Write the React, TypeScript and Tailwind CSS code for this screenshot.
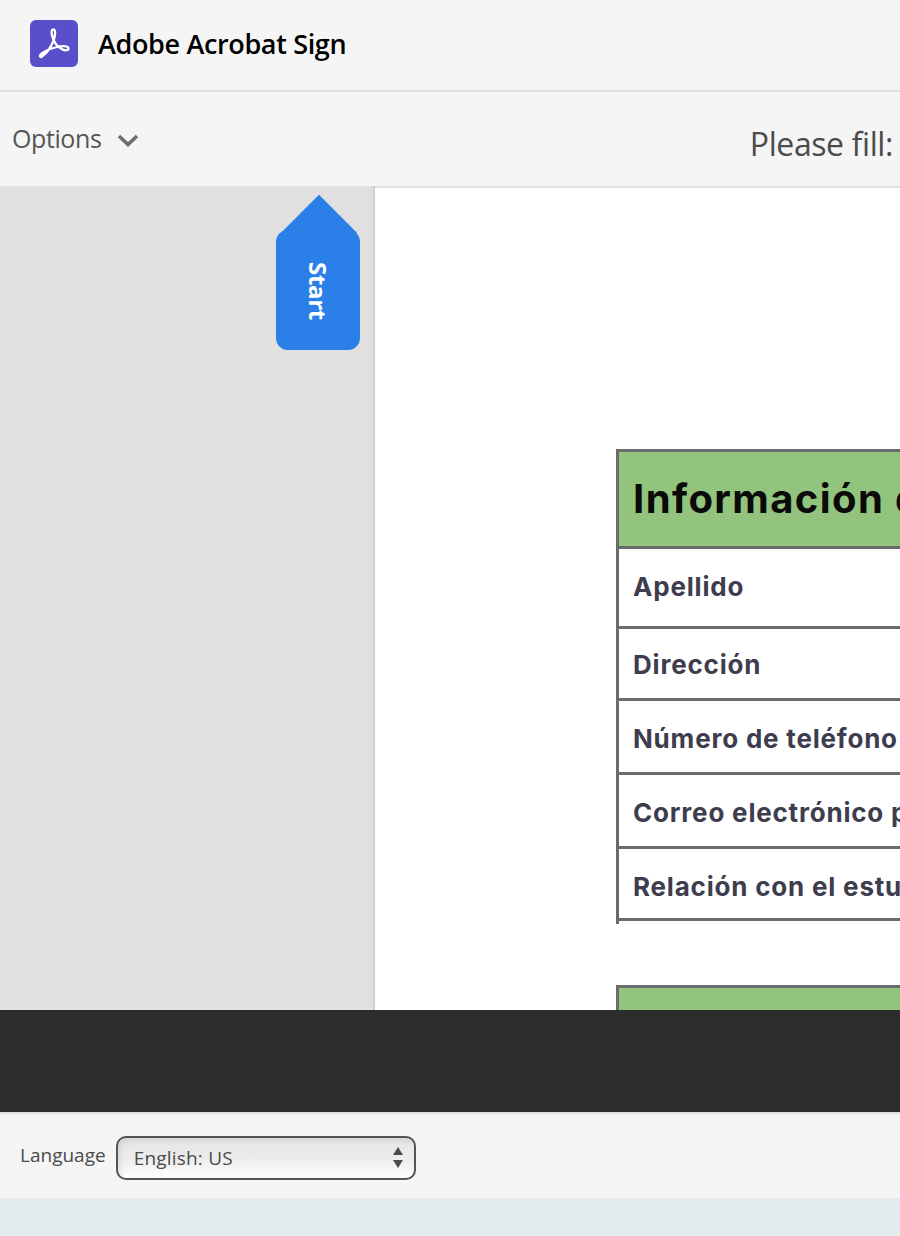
import React from 'react';

const rows = [
  { label: 'Apellido', cls: 'h-[80px] pb-[2px]' },
  { label: 'Dirección', cls: 'h-[72px] pt-[2px]' },
  { label: 'Número de teléfono', cls: 'h-[74px] pt-[4px]' },
  { label: 'Correo electrónico principal', cls: 'h-[74px] pt-[4px]' },
  { label: 'Relación con el estudiante', cls: 'h-[72px] pt-[6px]' },
];

const AcrobatLogo: React.FC = () => (
  <div className="w-[48px] h-[47px] rounded-[6px] bg-[#5a4fcb] flex items-center justify-center shrink-0">
    <svg width="48" height="47" viewBox="0 0 48 47" fill="none">
      <path
        d="M23.5 20C21.5 15 20.6 9.5 23.3 9.5C26 9.5 25.6 15.5 23.2 21.5C20.5 28 16 33.5 12.5 36.2C10 38 9.3 36.2 10.6 34.6C13.5 31.5 21 28.5 27 27C31 26 37.5 25.5 38.4 28C39 30 36.2 30.8 33.5 29.8C29.5 28.3 25.8 25 23.5 20Z"
        stroke="#ffffff"
        strokeWidth="2.3"
        strokeLinejoin="round"
      />
    </svg>
  </div>
);

const StartTag: React.FC = () => (
  <div className="absolute left-[276px] top-[9px] w-[84px] h-[155px]">
    <div className="absolute left-[16px] top-[11px] w-[54px] h-[54px] rotate-45 bg-[#2a7fe8]" />
    <div className="absolute left-0 top-[35px] w-[84px] h-[120px] rounded-[12px] bg-[#2a7fe8] flex items-center justify-center">
      <span className="[writing-mode:vertical-rl] text-white font-bold text-[24px] leading-none tracking-[-0.3px] font-['Open_Sans',sans-serif] mt-[2px]">
        Start
      </span>
    </div>
  </div>
);

const App: React.FC = () => {
  return (
    <div className="w-[900px] h-[1236px] overflow-hidden flex flex-col bg-[#e3ebee] font-['Open_Sans',sans-serif]">
      <header className="h-[92px] shrink-0 bg-[#f5f5f5] border-b-2 border-[#e0e0e0] pl-[30px] flex items-center gap-[20px] pb-[4px]">
        <AcrobatLogo />
        <span className="text-[27px] font-semibold text-black leading-none tracking-[-0.35px]">Adobe Acrobat Sign</span>
      </header>

      <div className="h-[94px] shrink-0 bg-[#f5f5f5] pl-[12px] flex items-center justify-between">
        <div className="flex items-center gap-[16px] pb-[2px]">
          <span className="text-[25px] text-[#555555] leading-none tracking-[-0.4px]">Options</span>
          <svg width="22" height="14" viewBox="0 0 22 14" fill="none" className="mt-[3px]">
            <path d="M2 3L11 11.5L20 3" stroke="#6e6e6e" strokeWidth="3.6" />
          </svg>
        </div>
        <span className="text-[32px] text-[#4b4b4b] leading-none whitespace-nowrap pr-[7px] pt-[10px] tracking-[-0.4px]">Please fill:</span>
      </div>

      <main className="relative h-[824px] shrink-0 flex overflow-hidden">
        <aside className="w-[373px] shrink-0 bg-[#e0e0e0] border-r-[2px] border-[#cfcfcf] box-content" />
        <StartTag />
        <section className="flex-1 min-w-0 bg-white border-t-2 border-[#e0e0e0] pl-[241px] pt-[261px] overflow-hidden font-['Inter',sans-serif]">
          <div className="w-[600px]">
            <div className="border-t-[3px] border-l-[3px] border-[#6b6b6b] pb-[3px]">
              <div className="h-[97px] bg-[#93c47d] border-b-[3px] border-[#6b6b6b] flex items-center pl-[14px]">
                <span className="text-[40px] font-bold text-[#0a0a0a] leading-none tracking-[1.4px] whitespace-nowrap">Información del contacto</span>
              </div>
              {rows.map((r) => (
                <div key={r.label} className={`${r.cls} border-b-[3px] border-[#6b6b6b] flex items-center pl-[14px]`}>
                  <span className="text-[26px] font-bold text-[#3d3d4d] leading-none tracking-[0.8px] whitespace-nowrap">{r.label}</span>
                </div>
              ))}
            </div>
            <div className="mt-[61px] border-t-[3px] border-l-[3px] border-[#6b6b6b]">
              <div className="h-[96px] bg-[#93c47d]" />
            </div>
          </div>
        </section>
      </main>

      <div className="h-[102px] shrink-0 bg-[#2c2c2c]" />

      <footer className="h-[86px] shrink-0 bg-[#f5f5f5] border-t-2 border-[#e0e0e0] pl-[20px] flex items-center gap-[10px] pt-[4px]">
        <label className="text-[19px] text-[#4b4b4b] leading-none -mt-[6px]">Language</label>
        <div className="relative">
          <select
            defaultValue="en"
            className="appearance-none w-[300px] h-[44px] pl-[16px] rounded-[10px] border-2 border-[#555555] bg-gradient-to-b from-[#e6e6e6] via-[#ececec] to-[#ffffff] text-[19px] tracking-[0.2px] text-[#4b4b4b] shadow-[inset_3px_3px_5px_rgba(0,0,0,0.08)] outline-none"
          >
            <option value="en">English: US</option>
          </select>
          <svg width="12" height="22" viewBox="0 0 12 22" className="absolute right-[12px] top-[11px]">
            <path d="M6 0L11 8H1Z" fill="#4b4b4b" />
            <path d="M6 21L11 13H1Z" fill="#4b4b4b" />
          </svg>
        </div>
      </footer>
    </div>
  );
};

export default App;
